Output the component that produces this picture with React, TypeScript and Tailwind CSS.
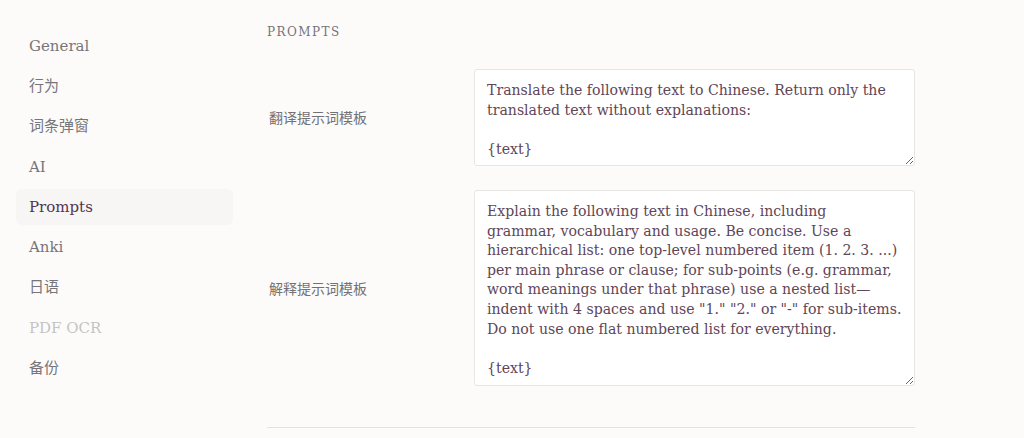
import React from "react";

const nav = [
  { label: "General", state: "normal" },
  { label: "行为", state: "normal" },
  { label: "词条弹窗", state: "normal" },
  { label: "AI", state: "normal" },
  { label: "Prompts", state: "active" },
  { label: "Anki", state: "normal" },
  { label: "日语", state: "normal" },
  { label: "PDF OCR", state: "disabled" },
  { label: "备份", state: "normal" },
];

const t1 = "Translate the following text to Chinese. Return only the\ntranslated text without explanations:\n\n{text}";
const t2 =
  'Explain the following text in Chinese, including\ngrammar, vocabulary and usage. Be concise. Use a\nhierarchical list: one top-level numbered item (1. 2. 3. ...)\nper main phrase or clause; for sub-points (e.g. grammar,\nword meanings under that phrase) use a nested list—\nindent with 4 spaces and use "1." "2." or "-" for sub-items.\nDo not use one flat numbered list for everything.\n\n{text}';

const serif = "font-['DejaVu_Serif','Noto_Sans_CJK_SC',serif]";

export default function App() {
  return (
    <div className="min-h-[438px] w-[1024px] bg-[#fcfbfa] flex font-['DejaVu_Serif','Noto_Sans_CJK_SC',serif]">
      <aside className="w-[233px] pl-4 pt-[28px] flex flex-col gap-[4px] shrink-0">
        {nav.map((n) => (
          <div
            key={n.label}
            className={
              "h-[36.25px] flex items-center px-[13px] rounded-md text-[15px] " +
              (n.state === "active"
                ? "bg-[#f7f6f5] text-[#55344e]"
                : n.state === "disabled"
                ? "text-[#c6c3c2]"
                : "text-[#77757a]")
            }
          >
            {n.label}
          </div>
        ))}
      </aside>
      <main className="ml-[34px] w-[648px] pt-[24px]">
        <h2 className="text-[12px] tracking-[0.12em] text-[#77737a] leading-4">PROMPTS</h2>
        <div className="mt-[17px] border-b border-[#e4e1df] pb-[29px]">
          <Row label="翻译提示词模板" value={t1} h="h-[97px]" />
          <Row label="解释提示词模板" value={t2} h="h-[196px]" />
        </div>
      </main>
    </div>
  );
}

function Row({ label, value, h }: { label: string; value: string; h: string }) {
  return (
    <div className="grid grid-cols-[207px_441px] items-center py-3">
      <div className="pl-[2px] text-[14px] text-[#727176] font-['Noto_Sans_CJK_SC',sans-serif]">{label}</div>
      <textarea
        wrap="off"
        defaultValue={value}
        className={
          "block w-[441px] overflow-hidden whitespace-pre bg-white border border-[#e8e5e3] rounded-[3px] px-3 pt-[11px] pb-[7px] text-[14.1px] leading-[19.6px] text-[#5f4658] outline-none " +
          h +
          " " +
          serif
        }
      />
    </div>
  );
}
